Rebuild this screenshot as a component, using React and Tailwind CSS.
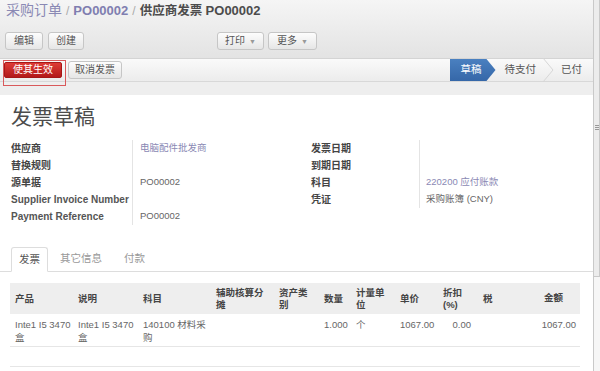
import React from "react";

const font = "font-['Liberation_Sans','Noto_Sans_CJK_SC',sans-serif]";

function Btn({ children, caret, className = "" }) {
  return (
    <button type="button"
      className={`h-[18px] flex items-center justify-center gap-[4px] rounded-[3px] border border-[#c6c6c6] bg-gradient-to-b from-[#fdfdfd] to-[#e6e6e6] text-[10px] text-[#555] leading-none ${className}`}>
      {children}
      {caret && <span className="text-[7px] text-[#999]">▼</span>}
    </button>
  );
}

function Field({ label, value, link, latin }) {
  return (
    <div className="flex h-[17px] items-center">
      <div className={`w-[123px] pl-[1px] border-r border-[#e4e4e4] h-full flex items-center font-bold text-[#444] ${latin ? "text-[10px] text-[#555]" : "text-[10px]"}`}>{label}</div>
      <div className={`pl-[7px] text-[9.5px] ${link ? "text-[#8a89b4]" : "text-[#666]"}`}>{value}</div>
    </div>
  );
}

function Field2({ label, value, link }) {
  return (
    <div className="flex h-[17px] items-center">
      <div className="w-[110px] pl-[1px] border-r border-[#e4e4e4] h-full flex items-center font-bold text-[10px] text-[#444]">{label}</div>
      <div className={`pl-[6px] text-[9.5px] ${link ? "text-[#8a89b4]" : "text-[#666]"}`}>{value}</div>
    </div>
  );
}

export default function App() {
  const heads = [
    ["产品"], ["说明"], ["科目"], ["辅助核算分", "摊"], ["资产类", "别"], ["数量"],
    ["计量单", "位"], ["单价"], ["折扣", "(%)"], ["税"],
  ];
  const widths = [63, 65, 73, 63, 45, 32, 44, 43, 40, 42, 60];

  return (
    <div className={`${font} w-[600px] h-[371px] overflow-hidden flex bg-white`}>
      <div className="flex-1 min-w-0 relative">
        {/* header */}
        <div className="h-[58px] bg-gradient-to-b from-[#f5f5f5] to-[#e3e3e3] px-[5px]">
          <div className="h-[21px] flex items-center gap-[4px] whitespace-nowrap">
            <span className="text-[14px] text-[#8a89b4] pl-[1px]">采购订单</span>
            <span className="text-[12px] text-[#aaa]">/</span>
            <span className="text-[13px] font-bold text-[#7f7eb0]">PO00002</span>
            <span className="text-[12px] text-[#aaa]">/</span>
            <span className="text-[12.5px] font-bold text-[#4c4c4c]">供应商发票 <span className="text-[13px]">PO00002</span></span>
          </div>
          <div className="mt-[11px] flex">
            <Btn className="w-[38px]">编辑</Btn>
            <Btn className="w-[36px] ml-[5px]">创建</Btn>
            <Btn caret className="w-[47px] ml-[133px]">打印</Btn>
            <Btn caret className="w-[49px] ml-[4px]">更多</Btn>
          </div>
        </div>

        {/* status bar */}
        <div className="h-[24px] flex items-center border-t border-[#d4d4d4] border-b border-b-[#d8d8d8] bg-gradient-to-b from-[#fafafa] to-[#ececec]">
          <button type="button" className="ml-[4px] h-[16px] w-[58px] rounded-[2px] border border-[#a51818] bg-gradient-to-b from-[#de3b36] to-[#b3191a] text-[10px] text-white leading-none">使其生效</button>
          <Btn className="w-[54px] h-[17px] ml-[6px]">取消发票</Btn>
          <div className="ml-auto flex items-center h-full text-[10.5px] text-[#555]">
            <div className="h-full w-[46px] bg-gradient-to-b from-[#4a80c0] to-[#3567a8] text-white flex items-center pl-[11px] [clip-path:polygon(0_0,37px_0,46px_50%,37px_100%,0_100%)]">草稿</div>
            <span className="ml-[9px]">待支付</span>
            <svg width="14" height="24" viewBox="0 0 14 24" className="ml-[5px]">
              <polyline points="2,0 12,12 2,24" fill="none" stroke="#d6d6d6" strokeWidth="1" />
            </svg>
            <span className="ml-[6px] mr-[11px]">已付</span>
          </div>
        </div>

        {/* annotation outline */}
        <div className="absolute left-[3px] top-[60px] w-[63px] h-[26px] border border-solid border-[color:#d9595b]" />

        <div className="h-[13px] bg-[#eeeeee]" />

        {/* sheet */}
        <div className="bg-white">
          <div className="pl-[11px] pt-[9px] text-[21px] leading-[26px] text-[#4c4c4c]">发票草稿</div>
          <div className="mt-[10px] flex pl-[10px]">
            <div className="w-[300px]">
              <Field label="供应商" value="电脑配件批发商" link />
              <Field label="替换规则" value="" />
              <Field label="源单据" value="PO00002" />
              <Field label="Supplier Invoice Number" value="" latin />
              <Field label="Payment Reference" value="PO00002" latin />
            </div>
            <div>
              <Field2 label="发票日期" value="" />
              <Field2 label="到期日期" value="" />
              <Field2 label="科目" value="220200 应付账款" link />
              <Field2 label="凭证" value="采购账簿 (CNY)" />
            </div>
          </div>

          {/* tabs */}
          <div className="mt-[22px] h-[25px] border-b border-[#dddddd] flex items-end pl-[11px] text-[10.5px]">
            <div className="h-[25px] w-[37px] -mb-[1px] border border-[#dddddd] border-b-white rounded-t-[3px] bg-white flex items-center justify-center text-[#555]">发票</div>
            <div className="h-[24px] flex items-center ml-[12px] text-[#999]">其它信息</div>
            <div className="h-[24px] flex items-center ml-[22px] text-[#999]">付款</div>
          </div>

          {/* table */}
          <table className="mt-[11px] ml-[10px] w-[570px] table-fixed border-collapse text-[9.5px]">
            <colgroup>
              {widths.map((w, i) => <col key={i} style={{ width: w }} />)}
            </colgroup>
            <thead>
              <tr className="h-[31px] bg-[#eeeeee] text-[#444] font-bold text-left">
                {heads.map((h, i) => (
                  <th key={i} className="pl-[5px] font-bold leading-[12px] align-middle">
                    {h[0]}{h[1] && <><br />{h[1]}</>}
                  </th>
                ))}
                <th className="text-right pr-[17px] font-bold">金额</th>
              </tr>
            </thead>
            <tbody className="text-[#666]">
              <tr className="h-[32px] border-b border-[#e6e6e6] align-top">
                <td className="pl-[5px] pt-[4px] leading-[13px]">Inte1 I5 3470<br />盒</td>
                <td className="pl-[5px] pt-[4px] leading-[13px]">Inte1 I5 3470<br />盒</td>
                <td className="pl-[5px] pt-[4px] leading-[13px]">140100 材料采<br />购</td>
                <td />
                <td />
                <td className="pl-[5px] pt-[4px] leading-[13px]">1.000</td>
                <td className="pl-[5px] pt-[4px] leading-[13px]">个</td>
                <td className="pl-[5px] pt-[4px] leading-[13px]">1067.00</td>
                <td className="pr-[7px] pt-[4px] leading-[13px] text-right">0.00</td>
                <td />
                <td className="pr-[4px] pt-[4px] leading-[13px] text-right">1067.00</td>
              </tr>
              <tr className="h-[20px] border-b border-[#e6e6e6]">
                <td colSpan={11} />
              </tr>
            </tbody>
          </table>
        </div>
      </div>

      {/* scrollbar */}
      <div className="w-[7px] border-l border-[#c9c9c9] bg-[#f6f6f6] flex flex-col">
        <div className="h-[277px] bg-[#ececec] border-b border-r border-[#c9c9c9] flex items-center justify-center">
          <div className="flex flex-col gap-[1px] mb-[22px]">
            <div className="w-[4px] h-px bg-[#999]" />
            <div className="w-[4px] h-px bg-[#999]" />
            <div className="w-[4px] h-px bg-[#999]" />
          </div>
        </div>
      </div>
    </div>
  );
}
